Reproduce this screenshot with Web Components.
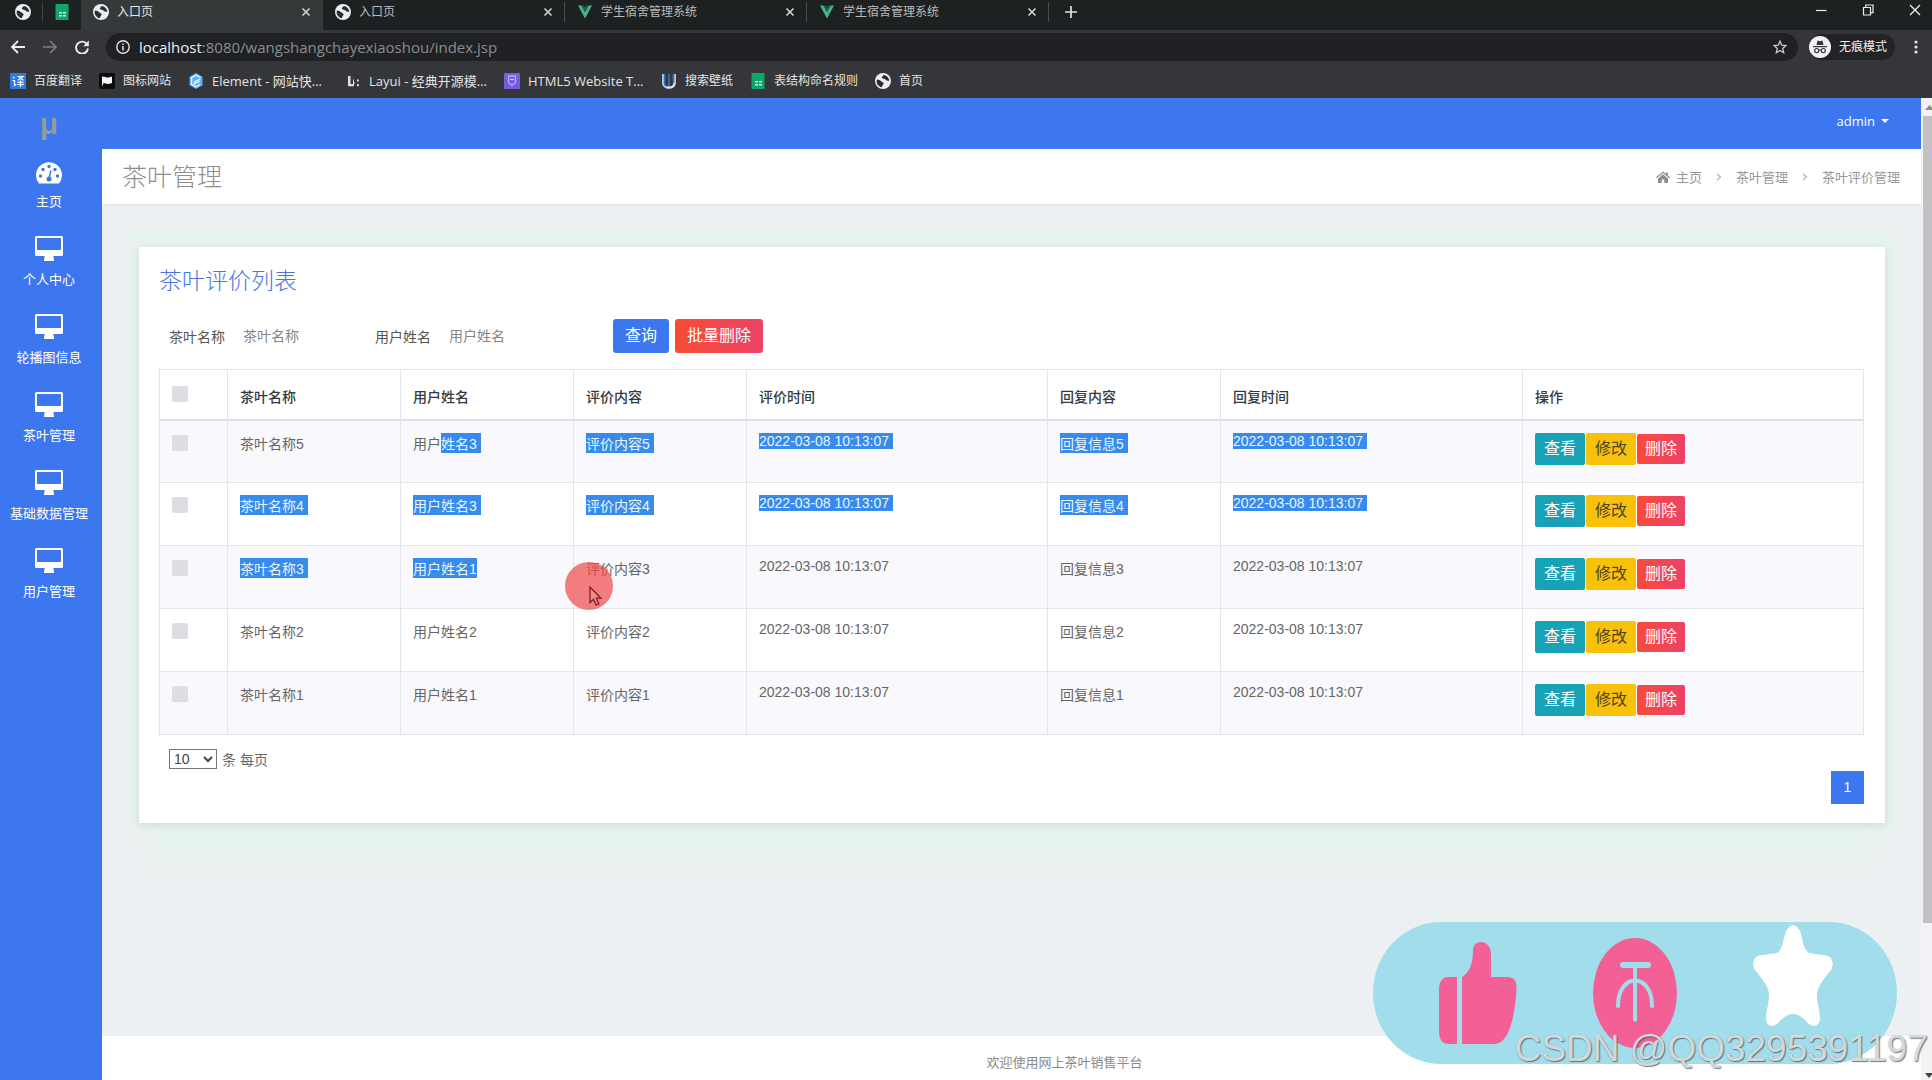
<!DOCTYPE html>
<html lang="zh-CN">
<head>
<meta charset="utf-8">
<title>入口页</title>
<style>
  html, body { margin: 0; height: 100%; }
  body {
    display: flex; flex-direction: column; min-height: 100vh; overflow: hidden;
    font-family: "Liberation Sans", "Noto Sans CJK SC", sans-serif; font-size: 14px; color: #666;
    --blue: #3d77f0;
  }
  app-shell { flex: 1; }
</style>
</head>
<body>
<browser-chrome></browser-chrome>
<app-shell></app-shell>
<like-banner></like-banner>

<script>
const define = (name, html, setup) => {
  const tpl = document.createElement('template');
  tpl.innerHTML = html;
  customElements.define(name, class extends HTMLElement {
    constructor() {
      super();
      this.attachShadow({ mode: 'open' }).appendChild(tpl.content.cloneNode(true));
    }
    connectedCallback() { if (setup) setup.call(this, this.shadowRoot); }
  });
};

/* ---------- icons ---------- */
const ICONS = {
  globe: ['0 0 16 16', '<circle cx="8" cy="8" r="8" fill="#eceeef"/><path d="M2 6.5c2 .2 3 .8 4 1.800 1 1 2.600.8 2.600 2.200 0 1.300-1.600 1.500-1.800 3.800C3.800 13.600 1.600 11 1.600 8zM8.500 2c-.5 1.500-2.300 1.700-1.500 3 .8 1.200 2.600.4 3.400 1.600.8 1.100 2.200 1.200 3.900 1.200C14.200 4.800 11.800 2.300 8.500 2z" fill="#2b2e31"/>'],
  sheet: ['0 0 16 16', '<path d="M1.500 0h13v16h-13z" fill="#12a56b"/><path d="M5 8h3v1.500H5zM9 8h3v1.500H9zM5 11h3v1.500H5zM9 11h3v1.500H9z" fill="#c5f1dd"/>'],
  vue: ['0 0 16 16', '<path d="M1 1.500h3.300L8 8l3.700-6.500H15L8 14.500z" fill="#41b883"/><path d="M4.300 1.500h2.500L8 3.600l1.200-2.100h2.500L8 8z" fill="#2c5a58"/>'],
  trans: ['0 0 16 16', '<rect width="16" height="16" fill="#2a7de8"/><path d="M3 4l1.500 1.300M2.500 7.500h2v5l1.500-1.300M7.500 3.500h5.500L8 7.200M9 4.500l4.500 2.800M7.500 9.300h6M7 11.500h7M10.500 7.500v6.500" stroke="#fff" stroke-width="1.200" fill="none"/>'],
  flag: ['0 0 16 16', '<rect width="16" height="16" rx="2" fill="#0c0c0d"/><path d="M3 3.500h1v9H3zM4 4c2-1 3 .8 5 .6 1.500-.1 2-.8 4-.8v6.400c-2 0-2.500.7-4 .8-2 .2-3-1.200-5-.4z" fill="#f4f4f4"/>'],
  element: ['0 0 16 16', '<path d="M8 0l6.500 3.800v8.400L8 16l-6.500-3.800V3.800z" fill="#5bb0f4"/><path d="M12.500 4.500L8 2.200 3.600 4.700v6.600L8 13.800l4-2.300M12.300 6L6.500 9v1.800L12 8" fill="none" stroke="#e9f5ff" stroke-width="1.300"/>'],
  layui: ['0 0 16 16', '<path d="M3 3h2.500v8H9v2.200H3zM8 5l1.800 6H8zM12 6.500h1.800v2H12zM12 11h1.800v2.200H12z" fill="#dedede"/>'],
  html5: ['0 0 16 16', '<rect width="16" height="16" rx="1" fill="#7a5be0"/><path d="M4.500 3h7v6.500L8 12.500 4.500 9.500z" fill="none" stroke="#b9a7f5" stroke-width="1.300"/><path d="M6 6.500h4" stroke="#d7ccff"/>'],
  wallpaper: ['0 0 16 16', '<path d="M2.500 1v9a4.500 4.500 0 0 0 4.500 4.500h2A4.500 4.500 0 0 0 13.500 10V1" fill="none" stroke="#dce6f2" stroke-width="2.600"/><path d="M3.500 1v9.500c0 1.500 1.500 2.500 2.500 2.500M8 1v12M12.500 1v9" fill="none" stroke="#326fc2" stroke-width="1.800"/>'],
  close: ['0 0 10 10', '<path d="M1.500 1.500l7 7M8.500 1.500l-7 7" stroke="#d6d8da" stroke-width="1.500" fill="none"/>'],
  plus: ['0 0 12 12', '<path d="M6 0v12M0 6h12" stroke="#dfe1e3" stroke-width="1.700"/>'],
  back: ['0 0 14 14', '<path d="M14 7H1.500M7 1L1 7l6 6" stroke="#eee" stroke-width="1.800" fill="none"/>'],
  forward: ['0 0 14 14', '<path d="M0 7h12.500M7 1l6 6-6 6" stroke="#7c7e81" stroke-width="1.600" fill="none"/>'],
  reload: ['0 0 14 14', '<path d="M12 4.200A6 6 0 1 0 13 8.500" stroke="#eee" stroke-width="1.900" fill="none"/><path d="M13.800.5v5.700H8.200z" fill="#eee"/>'],
  info: ['0 0 14 14', '<circle cx="7" cy="7" r="6.200" stroke="#e4e4e4" stroke-width="1.400" fill="none"/><path d="M7 6v4.500M7 3.500v1.500" stroke="#e4e4e4" stroke-width="1.500"/>'],
  star: ['0 0 14 14', '<path d="M7 1.200l1.700 4 4.300.4-3.300 2.800 1 4.300L7 10.400l-3.700 2.300 1-4.300L1 5.600l4.300-.4z" stroke="#c9cbcd" stroke-width="1.300" fill="none"/>'],
  spy: ['0 0 22 22', '<circle cx="11" cy="11" r="11" fill="#f2f3f4"/><path d="M7.500 9l1-4.500 2.500.8 2.500-.8 1 4.500zM4 10h14v1.300H4z" fill="#35363a"/><circle cx="7.700" cy="14.600" r="2.100" fill="none" stroke="#35363a" stroke-width="1.200"/><circle cx="14.300" cy="14.600" r="2.100" fill="none" stroke="#35363a" stroke-width="1.200"/><path d="M9.800 14.200q1.200-.6 2.400 0" stroke="#35363a" fill="none"/>'],
  dots: ['0 0 4 14', '<circle cx="2" cy="2" r="1.600" fill="#e4e4e4"/><circle cx="2" cy="7" r="1.600" fill="#e4e4e4"/><circle cx="2" cy="12" r="1.600" fill="#e4e4e4"/>'],
  min: ['0 0 12 12', '<path d="M1 6.500h10.500" stroke="#eee" stroke-width="1.200"/>'],
  max: ['0 0 12 12', '<path d="M1.500 3.500h7v7.500h-7zM3.700 3.500V1H11v7.700H8.500" stroke="#eee" stroke-width="1.200" fill="none"/>'],
  exit: ['0 0 12 12', '<path d="M1 1l10 10M11 1L1 11" stroke="#f4f4f4" stroke-width="1.300"/>'],
  gauge: ['0 0 26 22', '<path d="M3 21.500A13 13 0 1 1 23 21.500z" fill="#fff"/><g fill="#3d77f0"><circle cx="4.500" cy="14" r="1.700"/><circle cx="7" cy="7.500" r="1.700"/><circle cx="13" cy="4.500" r="1.700"/><circle cx="19" cy="7.500" r="1.700"/><circle cx="21.500" cy="14" r="1.700"/><circle cx="13" cy="17" r="2.500"/></g><path d="M13 17l1.800-8.500" stroke="#3d77f0" stroke-width="1.500"/>'],
  desktop: ['0 0 28 28', '<path fill-rule="evenodd" d="M1.500 2h25A1.500 1.500 0 0 1 28 3.500v17a1.500 1.500 0 0 1-1.500 1.500h-8v2.500H19V27H9v-2.500h.5V22h-8A1.500 1.500 0 0 1 0 20.500v-17A1.500 1.500 0 0 1 1.500 2zM2 4v12h24V4z" fill="#fff"/>'],
  home: ['0 0 14 12', '<path d="M7 .5l2.800 2.400V1.500h2v3L14 6.300l-.7.9L7 2 .7 7.200 0 6.300zM7 3.300l5 4.100V12H8.300V8.500H5.700V12H2V7.400z" fill="#8d8d8d"/>'],
  chev: ['0 0 6 8', '<path d="M1 .8L4.500 4 1 7.200" stroke="#aaa" stroke-width="1.100" fill="none"/>'],
  caret: ['0 0 8 4', '<path d="M0 0h8L4 4z" fill="#fff"/>']
};
define('ui-icon', '', function (root) {
  const [box, body] = ICONS[this.getAttribute('name')];
  const [, , w, h] = box.split(' ');
  root.innerHTML = `<style>:host{display:inline-flex;flex:none}svg{display:block}</style><svg width="${w}" height="${h}" viewBox="${box}" aria-hidden="true">${body}</svg>`;
});

/* ---------- browser chrome ---------- */
define('browser-tab', `<style>
  :host{display:flex;align-items:center;box-sizing:border-box;width:242px;height:30px;padding:0 12px 6px;color:#b9bcbe;position:relative}
  :host([active]){background:#35393a;color:#e6e7e8}
  .t{flex:1;display:flex;align-items:center;gap:8px;min-width:0;white-space:nowrap}
  button{all:unset;display:flex;padding:0 0 0 4px}
  :host([line])::after{content:"";position:absolute;right:0;top:2px;width:1px;height:20px;background:#4a4d50}
</style><div class="t"><slot name="icon"></slot><slot></slot></div><button aria-label="关闭"><ui-icon name="close"></ui-icon></button>`);

define('book-mark', `<style>
  :host{display:block}
  a{display:flex;align-items:center;gap:8px;color:#e3e4e5;text-decoration:none;white-space:nowrap}
  :host([wide]) span{min-width:116px;font-size:13px}
</style><a href="#"><slot name="icon"></slot><span><slot></slot></span></a>`);

define('browser-chrome', `<style>
  :host{display:flex;flex-direction:column;background:#35363a;font:12px/20px "Open Sans","Noto Sans CJK SC",sans-serif;color:#e3e4e5}
  .strip{display:flex;height:30px;background:#1d2121}
  .pins{display:flex;width:81px;height:24px;box-sizing:border-box;padding-left:15px;align-items:center;gap:11px}
  .pins i{width:1px;height:20px;background:#3d4143}
  .new{all:unset;display:flex;align-items:center;height:24px;padding:0 16px}
  .win{margin-left:auto;display:flex;gap:35px;height:19px;align-items:center;padding-right:11px}
  .win button,.bar button{all:unset;display:flex}
  .bar{display:flex;align-items:center;height:34px;padding:0 14px 0 11px}
  .nav{display:flex;gap:18px;width:95px}
  .url{flex:1;display:flex;align-items:center;height:28px;border-radius:14px;background:#1f2124;padding:0 11px 0 10px}
  .url div{flex:1;font-size:15px;margin-left:9px;color:#8b8e91}
  .url b{font-weight:400;color:#f0f0f0}
  .inc{display:flex;align-items:center;gap:8px;margin:0 19px 0 11px;padding-right:8px;height:26px;border-radius:13px;background:#222326;color:#f0f0f0}
  .marks{display:flex;align-items:center;height:34px;gap:17px;padding:0 10px}
</style>
<div class="strip" role="tablist">
  <div class="pins"><ui-icon name="globe"></ui-icon><i></i><ui-icon name="sheet"></ui-icon></div>
  <browser-tab active><ui-icon slot="icon" name="globe"></ui-icon>入口页</browser-tab>
  <browser-tab line><ui-icon slot="icon" name="globe"></ui-icon>入口页</browser-tab>
  <browser-tab line><ui-icon slot="icon" name="vue"></ui-icon>学生宿舍管理系统</browser-tab>
  <browser-tab line><ui-icon slot="icon" name="vue"></ui-icon>学生宿舍管理系统</browser-tab>
  <button class="new" aria-label="新标签页"><ui-icon name="plus"></ui-icon></button>
  <div class="win"><button aria-label="最小化"><ui-icon name="min"></ui-icon></button><button aria-label="还原"><ui-icon name="max"></ui-icon></button><button aria-label="关闭窗口"><ui-icon name="exit"></ui-icon></button></div>
</div>
<div class="bar">
  <div class="nav"><button aria-label="后退"><ui-icon name="back"></ui-icon></button><button aria-label="前进"><ui-icon name="forward"></ui-icon></button><button aria-label="刷新"><ui-icon name="reload"></ui-icon></button></div>
  <div class="url"><ui-icon name="info"></ui-icon><div role="textbox" aria-label="地址"><b>localhost</b>:8080/wangshangchayexiaoshou/index.jsp</div><ui-icon name="star"></ui-icon></div>
  <div class="inc"><ui-icon name="spy"></ui-icon><span>无痕模式</span></div>
  <button aria-label="菜单"><ui-icon name="dots"></ui-icon></button>
</div>
<nav class="marks">
  <book-mark><ui-icon slot="icon" name="trans"></ui-icon>百度翻译</book-mark>
  <book-mark><ui-icon slot="icon" name="flag"></ui-icon>图标网站</book-mark>
  <book-mark wide><ui-icon slot="icon" name="element"></ui-icon>Element - 网站快...</book-mark>
  <book-mark wide><ui-icon slot="icon" name="layui"></ui-icon>Layui - 经典开源模...</book-mark>
  <book-mark wide><ui-icon slot="icon" name="html5"></ui-icon>HTML5 Website T...</book-mark>
  <book-mark><ui-icon slot="icon" name="wallpaper"></ui-icon>搜索壁纸</book-mark>
  <book-mark><ui-icon slot="icon" name="sheet"></ui-icon>表结构命名规则</book-mark>
  <book-mark><ui-icon slot="icon" name="globe"></ui-icon>首页</book-mark>
</nav>`);

/* ---------- application ---------- */
define('side-item', `<style>
  :host{display:block}
  a{display:flex;flex-direction:column;align-items:center;gap:8px;color:#fff;text-decoration:none;font-size:13px;line-height:20px;white-space:nowrap}
</style><a href="#"><slot name="icon"></slot><span><slot></slot></span></a>`);

define('side-bar', `<style>
  :host{display:flex;flex-direction:column;gap:22px;flex:none;width:102px;box-sizing:border-box;padding-right:4px;background:var(--blue)}
  .logo{height:42px;text-align:center;color:#8f9d9c;font:bold 30px/52px "Liberation Sans",sans-serif}
</style>
<div class="logo">μ</div>
<side-item><ui-icon slot="icon" name="gauge"></ui-icon>主页</side-item>
<side-item><ui-icon slot="icon" name="desktop"></ui-icon>个人中心</side-item>
<side-item><ui-icon slot="icon" name="desktop"></ui-icon>轮播图信息</side-item>
<side-item><ui-icon slot="icon" name="desktop"></ui-icon>茶叶管理</side-item>
<side-item><ui-icon slot="icon" name="desktop"></ui-icon>基础数据管理</side-item>
<side-item><ui-icon slot="icon" name="desktop"></ui-icon>用户管理</side-item>`);

define('top-bar', `<style>
  :host{display:flex;justify-content:flex-end;height:51px;background:var(--blue)}
  button{all:unset;display:flex;align-items:center;gap:6px;height:46px;padding-right:32px;color:#fff;font:13px "Open Sans",sans-serif}
</style><button>admin<ui-icon name="caret"></ui-icon></button>`);

define('page-header', `<style>
  :host{display:flex;align-items:center;justify-content:space-between;height:55px;padding:0 21px 0 20px;background:#fff;border-bottom:1px solid #e6e6e8}
  h1{margin:0;font-size:25px;line-height:36px;font-weight:300;color:#8e8e8e}
  nav{display:flex;align-items:center;font-size:13px;color:#999}
  a{color:inherit;text-decoration:none}
  ui-icon[name=home]{margin-right:6px}
  ui-icon[name=chev]{margin:0 14px}
</style><h1>茶叶管理</h1>
<nav><ui-icon name="home"></ui-icon><a href="#">主页</a><ui-icon name="chev"></ui-icon><a href="#">茶叶管理</a><ui-icon name="chev"></ui-icon><span>茶叶评价管理</span></nav>`);

define('review-table', `<style>
  :host{display:block}
  table{width:100%;table-layout:fixed;border-collapse:collapse;border:1px solid #e4e5ea}
  th,td{box-sizing:border-box;border:1px solid #e4e5ea;padding:12px;text-align:left;vertical-align:top;font-weight:400}
  th{height:50px;padding:0 12px;vertical-align:middle;font-weight:500;color:#343a40;border-bottom:2px solid #dfe1e7}
  th span{display:block;padding-top:4px}
  td{height:63px}
  tbody tr:nth-child(odd){background:#f9f8fc}
  input{appearance:none;display:block;width:16px;height:16px;margin:2px 0 0;background:#dedee2;border-radius:2px}
  th input{margin:0 0 17px}
  th:first-child{vertical-align:bottom}
  mark{display:inline-block;background:#378bed;color:#e9f5ff}
  mark.sp{padding-right:4px}
  .ops{display:flex;align-items:center;gap:1px}
  button{all:unset;box-sizing:border-box;width:50px;height:32px;border-radius:2px;text-align:center;font-size:16px;line-height:32px;color:#fff}
  .view{background:#17a2b8}
  .edit{background:#fac10b;color:#4d4420}
  .del{width:48px;height:30px;line-height:30px;background:linear-gradient(90deg,#f84b3b,#ed4268)}
</style>
<table><colgroup><col style="width:68px"><col style="width:173px"><col style="width:173px"><col style="width:173px"><col style="width:301px"><col style="width:173px"><col style="width:302px"><col></colgroup>
<thead><tr><th><input type="checkbox" aria-label="全选"></th><th><span>茶叶名称</span></th><th><span>用户姓名</span></th><th><span>评价内容</span></th><th><span>评价时间</span></th><th><span>回复内容</span></th><th><span>回复时间</span></th><th><span>操作</span></th></tr></thead>
<tbody></tbody></table>`, function (root) {
  const time = '2022-03-08 10:13:07';
  const on = t => `<mark class="sp">${t}</mark>`;
  const rows = [
    ['茶叶名称5', '用户' + on('姓名3'), on('评价内容5'), on(time), on('回复信息5'), on(time)],
    [on('茶叶名称4'), on('用户姓名3'), on('评价内容4'), on(time), on('回复信息4'), on(time)],
    [on('茶叶名称3'), '<mark>用户姓名1</mark>', '评价内容3', time, '回复信息3', time],
    ['茶叶名称2', '用户姓名2', '评价内容2', time, '回复信息2', time],
    ['茶叶名称1', '用户姓名1', '评价内容1', time, '回复信息1', time]
  ];
  root.querySelector('tbody').innerHTML = rows.map(r =>
    `<tr><td><input type="checkbox" aria-label="选择"></td>${r.map(c => `<td>${c}</td>`).join('')}<td><div class="ops"><button class="view">查看</button><button class="edit">修改</button><button class="del">删除</button></div></td></tr>`).join('');
});

define('review-card', `<style>
  :host{display:block;background:#fff;padding:17px 21px 19px 20px;box-shadow:0 2px 8px rgba(80,100,100,.16),0 -4px 8px 12px #e6f3ed,0 50px 26px -8px #e6f3ed}
  h2{margin:0;font-size:23px;line-height:34px;font-weight:300;color:#4a76dc}
  form{display:flex;align-items:center;height:34px;margin:21px 0 16px;padding-left:10px}
  label{color:#555}
  .field{all:unset;box-sizing:border-box;width:145px;margin-left:5px;padding-left:13px;height:30px}
  .field::placeholder{color:#868686}
  form button{all:unset;box-sizing:border-box;height:34px;padding:0 12px;border-radius:3px;font-size:16px;line-height:34px;color:#fff;background:var(--blue)}
  form button.go{margin-left:32px;margin-right:6px}
  form button.del{background:linear-gradient(90deg,#f84b33,#ed4268)}
  .size{display:flex;align-items:center;gap:5px;margin:14px 0 0 10px;height:20px}
  .size label{color:#6a6a6a}
  select{box-sizing:border-box;width:48px;height:20px;padding:0;font:14px "Liberation Sans",sans-serif;color:#444;border:1px solid #777;background:#fff}
  .pages{display:flex;justify-content:flex-end;margin-top:2px}
  .pages a{width:33px;height:33px;background:var(--blue);color:#fff;text-align:center;line-height:33px;text-decoration:none}
</style>
<h2>茶叶评价列表</h2>
<form><label for="tea">茶叶名称</label><input class="field" id="tea" placeholder="茶叶名称"><label for="user">用户姓名</label><input class="field" id="user" placeholder="用户姓名"><button type="button" class="go">查询</button><button type="button" class="del">批量删除</button></form>
<review-table></review-table>
<div class="size"><select id="n" aria-label="每页条数"><option>10</option></select><label for="n">条 每页</label></div>
<div class="pages"><a href="#">1</a></div>`);

define('page-footer', `<style>
  :host{display:flex;justify-content:center;align-items:center;box-sizing:border-box;height:44px;padding:6px 0 0 106px;background:#fff;font-size:13px;color:#8a8a8a}
</style>欢迎使用网上茶叶销售平台`);

define('page-scroll', `<style>
  :host{display:flex;flex-direction:column;flex:none;width:11px;background:#f3f3f5;overflow:hidden;align-items:flex-end}
  svg{flex:none;display:block;width:8px;height:18px}
  .thumb{width:9px;flex:807;background:#c1c1c3}
  .rest{flex:139}
</style><svg viewBox="0 0 8 18"><path d="M1 12l4.500-5 4.500 5z" fill="#8b8b8b"/></svg><div class="thumb"></div><div class="rest"></div><svg viewBox="0 0 8 18"><path d="M1 11h8l-4 5z" fill="#444"/></svg>`);

define('click-pointer', `<style>
  :host{position:absolute;left:565px;top:562px;width:48px;height:48px;pointer-events:none}
</style><svg width="48" height="48" viewBox="0 0 48 48"><circle cx="24" cy="24" r="24" fill="#f04848" fill-opacity=".7"/><path d="M25 25v15.500l3.500-3.200 2.600 5.700 2.700-1.200-2.500-5.600h4.700z" fill="#f28a8a" stroke="#7d1f26" stroke-width="1.300"/></svg>`);

define('app-shell', `<style>
  :host{display:flex;min-height:0}
  .col{flex:1;display:flex;flex-direction:column;min-width:0;background:#edf0f2}
  main{flex:1;padding:42px 36px 0 37px}
  page-header{position:relative}
</style>
<side-bar></side-bar>
<div class="col"><top-bar></top-bar><page-header></page-header><main><review-card></review-card></main><page-footer></page-footer></div>
<page-scroll></page-scroll>
<click-pointer></click-pointer>`);

/* ---------- floating banner ---------- */
define('like-banner', `<style>
  :host{position:absolute;right:4px;bottom:5px;display:flex;flex-direction:column;align-items:flex-end;pointer-events:none}
  svg{display:block;margin:0 31px -41px 0}
  span{font:37px/52px "Liberation Sans",sans-serif;color:rgba(232,234,236,.85);text-shadow:1px 1px 1px rgba(70,80,90,.75),0 0 1px rgba(120,130,140,.6);white-space:nowrap}
</style>
<svg width="524" height="142" viewBox="0 0 524 142">
  <rect width="524" height="142" rx="68" ry="71" fill="#a1ddeb"/>
  <g fill="#f26096">
    <path d="M84 55v67h-8q-10 0-10-13V68q0-13 10-13z"/>
    <path d="M89 55c8-5 11-14 11-27 0-11 17-11 18 3v24h17q9 0 8.500 12c-1 16-3 32-9 45q-5 10-14 10H89z"/>
    <ellipse cx="262" cy="71" rx="42" ry="55"/>
  </g>
  <path d="M250 43h25" stroke="#a1ddeb" stroke-width="6" stroke-linecap="round"/>
  <path d="M262 43v55M245 84c0-34 34-34 34 0" fill="none" stroke="#a1ddeb" stroke-width="4" stroke-linecap="round"/>
  <path d="M413 9q7-12 14 0c3 9 3 18 9 22l14 2c9 0 12 8 8 15-8 10-14 17-14 25 0 9 3 16 3 23 0 8-6 10-11 6-6-6-10-10-16-10s-10 4-16 10c-5 4-11 2-11-6 0-7 3-14 3-23 0-8-6-15-14-25-4-7-1-15 8-15l14-2c6-4 6-13 9-22z" fill="#fff"/>
</svg>
<span>CSDN @QQ3295391197</span>`);
</script>
</body>
</html>
